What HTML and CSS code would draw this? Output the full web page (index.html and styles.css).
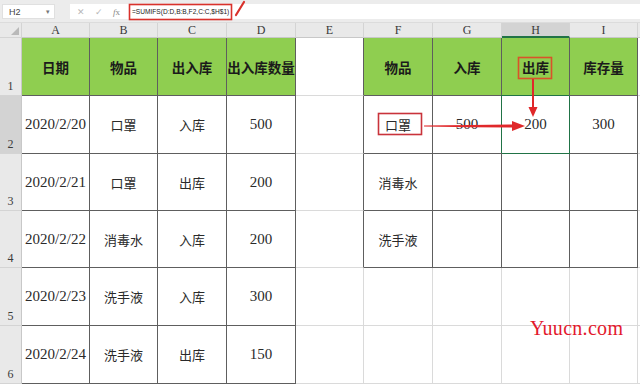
FILE: index.html
```html
<!DOCTYPE html>
<html lang="zh">
<head>
<meta charset="utf-8">
<title>SUMIFS</title>
<link rel="stylesheet" href="styles.css">
</head>
<body>
<div class="app">
  <div class="fbar">
    <div class="namebox"><span>H2</span><span class="dd">▾</span></div>
    <div class="finput">
      <span class="ico x">✕</span>
      <span class="ico ok">✓</span>
      <span class="ico fx"><i>f</i>x</span>
      <span class="formula">=SUMIFS(D:D,B:B,F2,C:C,$H$1)</span>
    </div>
  </div>
  <div class="sheet">
    <div class="corner"><span class="tri"></span></div>
    <div class="ch">A</div><div class="ch">B</div><div class="ch">C</div><div class="ch">D</div><div class="ch">E</div>
    <div class="ch">F</div><div class="ch">G</div><div class="ch sel">H</div><div class="ch">I</div><div class="ch end"></div>

    <div class="rh">1</div>
    <div class="cell g t">日期</div><div class="cell g t">物品</div><div class="cell g t">出入库</div><div class="cell g t">出入库数量</div>
    <div class="cell tl"></div>
    <div class="cell g t">物品</div><div class="cell g t">入库</div><div class="cell g t">出库</div><div class="cell g t">库存量</div><div class="cell end"></div>

    <div class="rh rsel">2</div>
    <div class="cell t">2020/2/20</div><div class="cell t c">口罩</div><div class="cell t c">入库</div><div class="cell t">500</div>
    <div class="cell tl"></div>
    <div class="cell t c">口罩</div><div class="cell t">500</div><div class="cell t act">200</div><div class="cell t">300</div><div class="cell end"></div>

    <div class="rh">3</div>
    <div class="cell t">2020/2/21</div><div class="cell t c">口罩</div><div class="cell t c">出库</div><div class="cell t">200</div>
    <div class="cell tl"></div>
    <div class="cell t c">消毒水</div><div class="cell t"></div><div class="cell t"></div><div class="cell t"></div><div class="cell end"></div>

    <div class="rh">4</div>
    <div class="cell t">2020/2/22</div><div class="cell t c">消毒水</div><div class="cell t c">入库</div><div class="cell t">200</div>
    <div class="cell tl"></div>
    <div class="cell t c">洗手液</div><div class="cell t"></div><div class="cell t"></div><div class="cell t"></div><div class="cell end"></div>

    <div class="rh">5</div>
    <div class="cell t">2020/2/23</div><div class="cell t c">洗手液</div><div class="cell t c">入库</div><div class="cell t">300</div>
    <div class="cell"></div>
    <div class="cell"></div><div class="cell"></div><div class="cell"></div><div class="cell"></div><div class="cell end"></div>

    <div class="rh">6</div>
    <div class="cell t">2020/2/24</div><div class="cell t c">洗手液</div><div class="cell t c">出库</div><div class="cell t">150</div>
    <div class="cell"></div>
    <div class="cell"></div><div class="cell"></div><div class="cell"></div><div class="cell"></div><div class="cell end"></div>
  </div>

  <svg class="notes" width="640" height="384" viewBox="0 0 640 384">
    <rect x="129.5" y="4.5" width="102" height="15" fill="none" stroke="#d9312b" stroke-width="1.6"/>
    <path d="M236 15 L244 2" stroke="#d9312b" stroke-width="2.2" stroke-linecap="round"/>
    <rect x="518.5" y="57.5" width="33" height="21" fill="none" stroke="#d9532a" stroke-width="1.6"/>
    <rect x="378.5" y="113.5" width="43" height="21" fill="none" stroke="#c9333b" stroke-width="1.6"/>
    <path d="M533 79 L533 109" stroke="#e0282a" stroke-width="2"/>
    <path d="M528.5 107 L537.5 107 L533 117 Z" fill="#e0282a"/>
    <path d="M424 125.6 L470 125 L514 124.4 L514 127.6 L470 127.2 L424 126.4 Z" fill="#e0282a"/>
    <path d="M512 121 L525 126 L512 131 Z" fill="#e0282a"/>
  </svg>
  <div class="wm">Yuucn.com</div>
</div>
</body>
</html>
```
FILE: styles.css
```css
* { box-sizing: border-box; }
html, body { margin: 0; padding: 0; background: #fff; }
.app { position: relative; width: 640px; height: 384px; overflow: hidden; }

.fbar {
  height: 23px;
  background: #ececec;
  display: flex;
  align-items: flex-start;
  padding: 4px 0 0 2px;
  gap: 15px;
  border-bottom: 1px solid #dcdcdc;
}
.namebox {
  width: 53px; height: 15px;
  background: #fff;
  border: 1px solid #e0e0e0;
  display: flex; align-items: center; justify-content: space-between;
  padding: 0 4px 0 6px;
  font: 9px "Liberation Sans", sans-serif; color: #444;
}
.namebox .dd { font-size: 7px; color: #777; }
.finput {
  flex: 1; height: 15px;
  background: #fff;
  display: flex; align-items: center;
  padding-left: 7px;
  font: 9px "Liberation Sans", sans-serif;
}
.ico { color: #b8b8b8; width: 18px; font-size: 9px; }
.ico.fx { width: 14px; font-family: "Liberation Serif", serif; color: #888; font-size: 9px; }
.formula { font: 6.6px "Liberation Sans", sans-serif; color: #222; padding-left: 5px; }

.sheet {
  display: grid;
  grid-template-columns: 22px 68px 68px 69px 69px 68px 69px 69px 68px 68px 1fr;
  grid-template-rows: 15px 58px 58px 57px 57px 58px 58px;
  font-family: "Liberation Serif", "Noto Sans CJK SC", serif;
}
.corner {
  background: #e9e9e9;
  border-right: 1px solid #d4d4d4;
  border-bottom: 1px solid #d4d4d4;
  position: relative;
}
.tri {
  position: absolute; right: 2px; bottom: 2px;
  width: 0; height: 0;
  border-left: 8px solid transparent;
  border-bottom: 8px solid #b9b9b9;
}
.ch {
  background: #e9e9e9;
  border-right: 1px solid #d4d4d4;
  border-bottom: 1px solid #c8c8c8;
  display: flex; align-items: center; justify-content: center;
  font: 12px "Liberation Serif", serif; color: #3a3a3a;
  padding-top: 1px;
}
.ch.sel { background: #d3d3d3; border-bottom: 2px solid #217346; }
.ch.end { border-right: none; }
.rh {
  background: #e9e9e9;
  border-right: 1px solid #c8c8c8;
  border-bottom: 1px solid #d4d4d4;
  display: flex; align-items: flex-end; justify-content: center;
  padding-bottom: 1px;
  font: 12px "Liberation Serif", serif; color: #3a3a3a;
}
.rh.rsel { background: #d3d3d3; }
.cell {
  border-right: 1px solid #dadada;
  border-bottom: 1px solid #dadada;
  display: flex; align-items: center; justify-content: center;
  font-size: 15px; color: #2a2a2a;
  white-space: nowrap;
}
.cell.t { border-right-color: #5e5e5e; border-bottom-color: #5e5e5e; }
.cell.tl { border-right-color: #5e5e5e; }
.cell.end { border-right: none; }
.cell.c { font-size: 13px; color: #2a2a2a; }
.cell.g {
  background: #8fce50;
  font-family: "Noto Sans CJK SC", sans-serif;
  font-weight: 700; font-size: 13.5px; color: #1b1b1b;
}
.cell.act { border-right-color: #217346; border-bottom-color: #217346; box-shadow: -1px -1px 0 0 #217346; }

.notes { position: absolute; left: 0; top: 0; pointer-events: none; }
.wm {
  position: absolute; left: 530px; top: 317px;
  font: 20px "Liberation Serif", serif; color: #e3192c;
  letter-spacing: 0.3px;
}
```
